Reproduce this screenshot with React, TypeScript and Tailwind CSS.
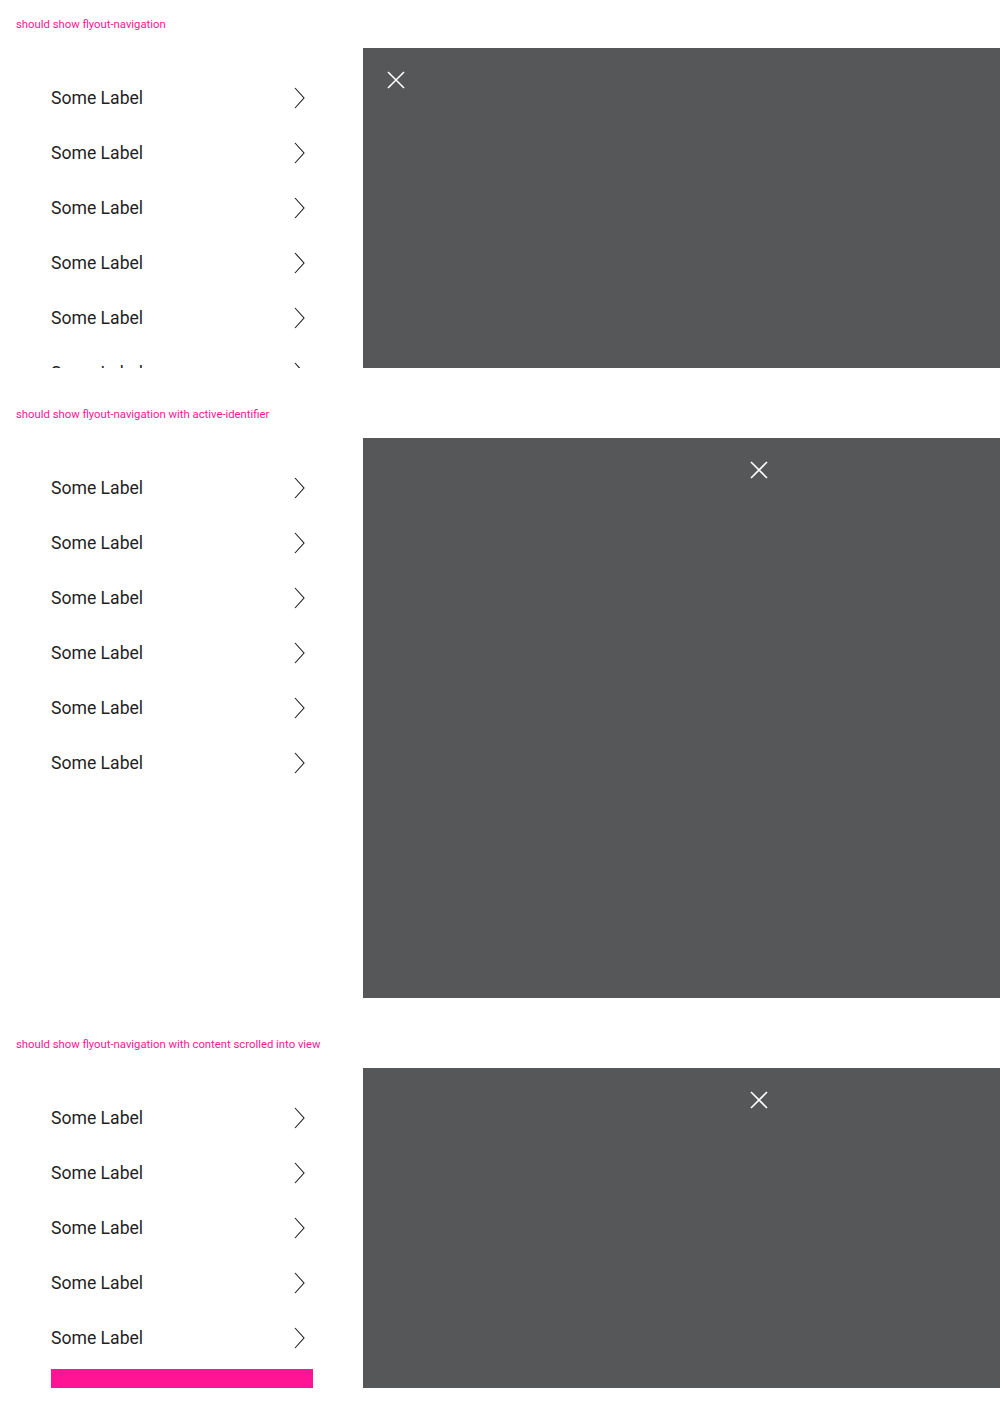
const labels = Array.from({ length: 6 }, () => "Some Label");

const Chevron = () => (
  <svg width="12" height="22" viewBox="0 0 12 22" fill="none" className="shrink-0">
    <polyline points="2,1 11,11 2,21" stroke="#1a1a1a" strokeWidth="1.1" strokeLinejoin="miter" />
  </svg>
);

const CloseIcon = () => (
  <svg width="18" height="18" viewBox="0 0 18 18" fill="none">
    <path d="M1 1L17 17M17 1L1 17" stroke="#ffffff" strokeWidth="1.6" />
  </svg>
);

const NavItem = ({ label }: { label: string }) => (
  <li className="flex h-[55px] w-[262px] items-center justify-between pr-[8px]">
    <span className="pt-[2px] text-[17.6px] leading-none text-[#1f1f1f]">{label}</span>
    <Chevron />
  </li>
);

interface SectionProps {
  title: string;
  height: string;
  closeOffset: string;
  items: number;
  showBar?: boolean;
}

const Section = ({ title, height, closeOffset, items, showBar }: SectionProps) => (
  <section className="pt-[17px] pb-[22px]">
    <h2 className="px-[16px] text-[11.3px] leading-[16px] text-[#ff1493]">{title}</h2>
    <div className={`mt-[15px] flex ${height}`}>
      <nav className="w-[363px] shrink-0 overflow-hidden pl-[51px] pt-[22px]">
        <ul>
          {labels.slice(0, items).map((l, i) => (
            <NavItem key={i} label={l} />
          ))}
        </ul>
        {showBar && <div className="mt-[4px] h-[30px] w-[262px] bg-[#ff1493]" />}
      </nav>
      <div className="flex-1 bg-[#565759]">
        <button className={`mt-[23px] ${closeOffset} block`}>
          <CloseIcon />
        </button>
      </div>
    </div>
  </section>
);

export default function App() {
  return (
    <div className="w-[1000px] bg-white" style={{ fontFamily: "Roboto, 'Liberation Sans', sans-serif" }}>
      <Section title="should show flyout-navigation" height="h-[320px]" closeOffset="ml-[24px]" items={6} />
      <Section
        title="should show flyout-navigation with active-identifier"
        height="h-[560px]"
        closeOffset="ml-[387px]"
        items={6}
      />
      <Section
        title="should show flyout-navigation with content scrolled into view"
        height="h-[320px]"
        closeOffset="ml-[387px]"
        items={5}
        showBar
      />
    </div>
  );
}
